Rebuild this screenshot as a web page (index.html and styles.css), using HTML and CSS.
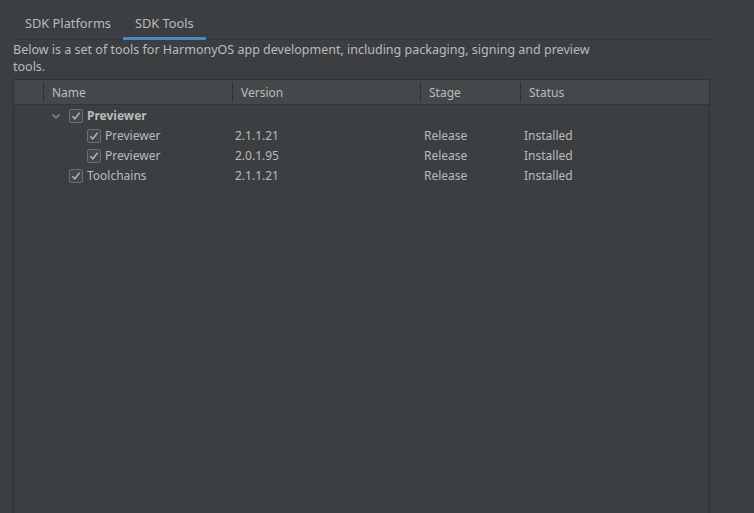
FILE: index.html
```html
<!DOCTYPE html>
<html>
<head>
<meta charset="utf-8">
<link rel="stylesheet" href="styles.css">
</head>
<body>
<div class="page">
  <div class="tabs">
    <div class="tab">SDK Platforms</div>
    <div class="tab active">SDK Tools</div>
  </div>
  <p class="desc">Below is a set of tools for HarmonyOS app development, including packaging, signing and preview tools.</p>
  <div class="table">
    <div class="head">
      <div class="hcell first"></div>
      <div class="hcell">Name</div>
      <div class="hcell">Version</div>
      <div class="hcell">Stage</div>
      <div class="hcell">Status</div>
    </div>
    <div class="body">
      <div class="row">
        <div class="name">
          <svg class="chev" width="8" height="5" viewBox="0 0 8 5"><path d="M0.5 0.5 L4 4 L7.5 0.5" fill="none" stroke="#9a9a9a" stroke-width="1.2"/></svg>
          <span class="cb"><svg width="14" height="14" viewBox="0 0 14 14"><path d="M3.3 7.2 L5.8 9.8 L10.6 3.8" fill="none" stroke="#b4b4b4" stroke-width="1.5"/></svg></span>
          <span class="label bold">Previewer</span>
        </div>
        <div class="cell ver"></div>
        <div class="cell"></div>
        <div class="cell"></div>
      </div>
      <div class="row">
        <div class="name child">
          <span class="cb"><svg width="14" height="14" viewBox="0 0 14 14"><path d="M3.3 7.2 L5.8 9.8 L10.6 3.8" fill="none" stroke="#b4b4b4" stroke-width="1.5"/></svg></span>
          <span class="label">Previewer</span>
        </div>
        <div class="cell ver">2.1.1.21</div>
        <div class="cell">Release</div>
        <div class="cell">Installed</div>
      </div>
      <div class="row">
        <div class="name child">
          <span class="cb"><svg width="14" height="14" viewBox="0 0 14 14"><path d="M3.3 7.2 L5.8 9.8 L10.6 3.8" fill="none" stroke="#b4b4b4" stroke-width="1.5"/></svg></span>
          <span class="label">Previewer</span>
        </div>
        <div class="cell ver">2.0.1.95</div>
        <div class="cell">Release</div>
        <div class="cell">Installed</div>
      </div>
      <div class="row">
        <div class="name leaf">
          <span class="cb"><svg width="14" height="14" viewBox="0 0 14 14"><path d="M3.3 7.2 L5.8 9.8 L10.6 3.8" fill="none" stroke="#b4b4b4" stroke-width="1.5"/></svg></span>
          <span class="label">Toolchains</span>
        </div>
        <div class="cell ver">2.1.1.21</div>
        <div class="cell">Release</div>
        <div class="cell">Installed</div>
      </div>
    </div>
  </div>
</div>
</body>
</html>
```

FILE: styles.css
```css
html, body {
  margin: 0;
  padding: 0;
  background: #3c3f41;
}
body {
  font-family: "Noto Sans", "Open Sans", sans-serif;
  font-size: 12px;
  color: #bbbbbb;
  width: 754px;
  height: 513px;
  overflow: hidden;
}
.page {
  padding: 0 44px 0 13px;
  display: flex;
  flex-direction: column;
  height: 513px;
  box-sizing: border-box;
}
.tabs {
  display: flex;
  height: 39px;
  border-bottom: 1px solid #323435;
}
.tab {
  height: 40px;
  box-sizing: border-box;
  padding: 13px 12px 0;
  line-height: 20px;
  font-size: 12.8px;
}
.tab.active {
  box-shadow: inset 0 -3px 0 #4a88c7;
}
.desc {
  margin: 0;
  width: 600px;
  line-height: 17px;
  font-size: 12.5px;
  padding-top: 1px;
}
.table {
  margin-top: 4px;
  flex: 1;
  border: 1px solid #2f3133;
  border-bottom: none;
  background: #3c3f41;
}
.head {
  display: grid;
  grid-template-columns: 29px 189px 188px 100px 189px;
  height: 24px;
  background: #45484a;
  border-bottom: 1px solid #323435;
}
.hcell {
  padding: 1px 0 0 9px;
  line-height: 23px;
  background: linear-gradient(#2f3133, #2f3133) left 2px / 1px calc(100% - 4px) no-repeat;
}
.hcell.first {
  background: none;
}
.body {
  padding-top: 1px;
}
.row {
  display: grid;
  grid-template-columns: 218px 188px 100px 189px;
  height: 20px;
  line-height: 20px;
}
.name {
  display: flex;
  align-items: center;
  padding-left: 38px;
}
.name.leaf {
  padding-left: 55px;
}
.name.child {
  padding-left: 73px;
}
.chev {
  margin-right: 9px;
  margin-top: 1px;
}
.cb {
  width: 14px;
  height: 14px;
  box-sizing: border-box;
  border: 1px solid #6b6e70;
  border-radius: 2px;
  background: #43494a;
  display: flex;
  align-items: center;
  justify-content: center;
  margin-right: 4px;
}
.cb svg {
  display: block;
  flex: none;
}
.label.bold {
  font-weight: bold;
}
.cell {
  padding-left: 4px;
}
.cell.ver {
  padding-left: 3px;
}
```
